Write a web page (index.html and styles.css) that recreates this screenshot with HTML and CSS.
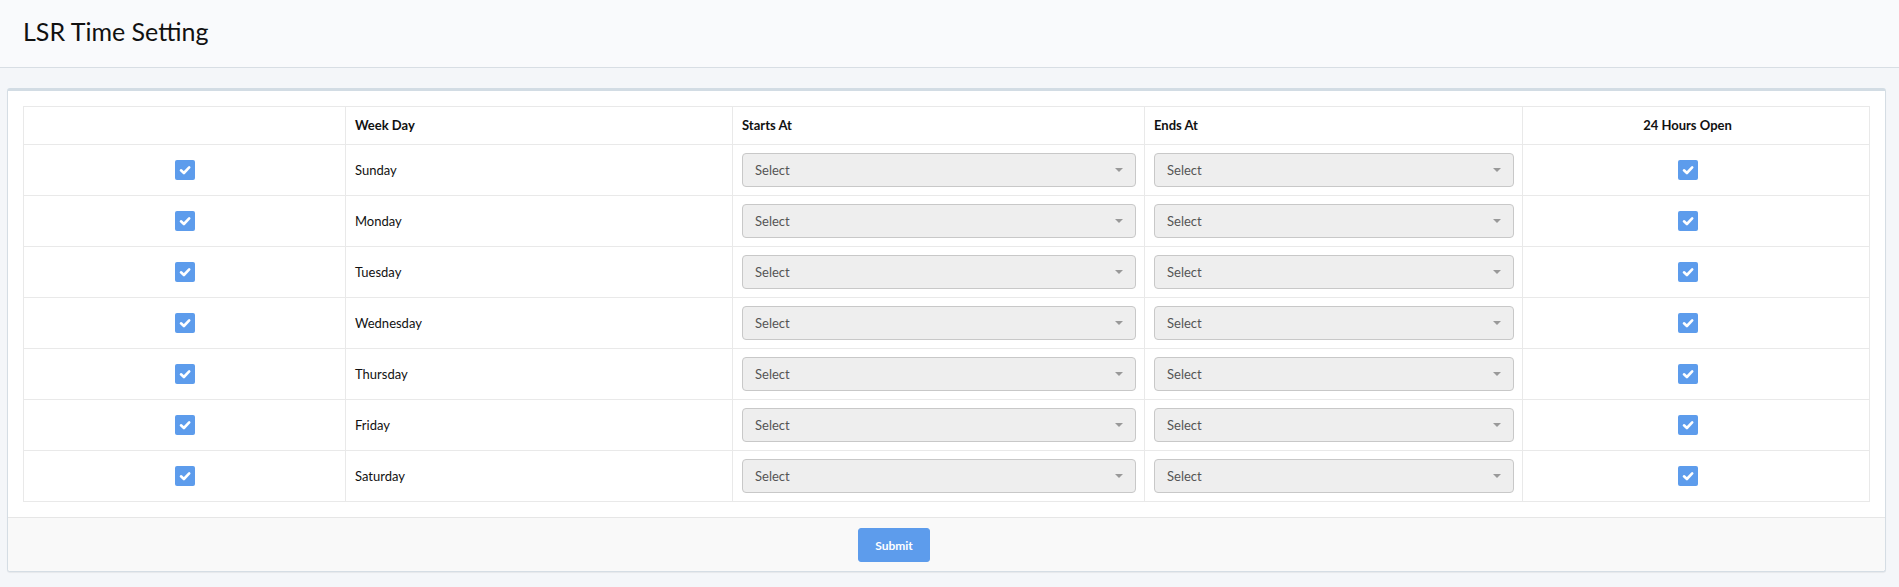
FILE: index.html
```html
<!DOCTYPE html>
<html>
<head>
<meta charset="utf-8">
<title>LSR Time Setting</title>
<link rel="stylesheet" href="styles.css">
</head>
<body>
<header class="page-header">
  <h1 class="page-title">LSR Time Setting</h1>
</header>
<main class="content">
  <section class="card">
    <div class="card-body">
      <table class="time-table">
        <colgroup>
          <col class="c-check"><col class="c-day"><col class="c-start"><col class="c-end"><col class="c-open">
        </colgroup>
        <thead>
          <tr><th></th><th>Week Day</th><th>Starts At</th><th>Ends At</th><th class="center open-cell">24 Hours Open</th></tr>
        </thead>
        <tbody id="rows"></tbody>
      </table>
    </div>
    <div class="card-footer">
      <button class="btn-submit" type="button">Submit</button>
    </div>
  </section>
</main>
<script>
  var days = ["Sunday","Monday","Tuesday","Wednesday","Thursday","Friday","Saturday"];
  var check = '<span class="cbox"><svg viewBox="0 0 20 20" width="20" height="20"><path d="M6 10.3 L8.9 13 L14.2 7.4" fill="none" stroke="#fff" stroke-width="2.6" stroke-linecap="round" stroke-linejoin="round"/></svg></span>';
  var sel = '<div class="select"><span class="select-text">Select</span><span class="select-arrow"></span></div>';
  var html = "";
  days.forEach(function(d){
    html += '<tr><td class="center">' + check + '</td><td>' + d + '</td><td class="sel-cell">' + sel + '</td><td class="sel-cell">' + sel + '</td><td class="center open-cell">' + check + '</td></tr>';
  });
  document.getElementById("rows").innerHTML = html;
</script>
</body>
</html>
```

FILE: styles.css
```css
* { box-sizing: border-box; }
html, body { margin: 0; padding: 0; }
body {
  background: #f4f6f9;
  font-family: Lato, "Open Sans", "Liberation Sans", sans-serif;
  color: #111;
  height: 587px;
  overflow: hidden;
}
.page-header {
  height: 68px;
  background: #f9fafc;
  border-bottom: 1px solid #d8dee4;
  padding: 0 23px;
  display: flex;
  align-items: center;
}
.page-title {
  margin: 0;
  font-size: 25px;
  font-weight: 400;
  color: #111;
  padding-bottom: 6px;
}
.content {
  padding: 20px 13px 0 7px;
}
.card {
  background: #fff;
  border: 1px solid #d5dde4;
  border-top: 3px solid #d2dce4;
  border-radius: 3px;
  box-shadow: 0 1px 1px rgba(0,0,0,0.06);
}
.card-body {
  padding: 15px;
}
.time-table {
  width: 100%;
  border-collapse: collapse;
  font-size: 13px;
  table-layout: fixed;
}
.c-check { width: 322px; }
.c-day { width: 387px; }
.c-start { width: 412px; }
.c-end { width: 378px; }
.c-open { width: auto; }
.time-table th, .time-table td {
  border: 1px solid #e9e9e9;
  padding: 0 9px 1px 9px;
  text-align: left;
  vertical-align: middle;
}
.time-table th {
  height: 38px;
  font-weight: 700;
}
.time-table td {
  height: 51px;
}
.time-table .center { text-align: center; }
.time-table .open-cell { padding-left: 8px; padding-right: 25px; }
.time-table .sel-cell { padding: 0 8px 0 9px; }
.cbox {
  display: inline-block;
  width: 20px;
  height: 20px;
  background: #5d9cec;
  border-radius: 2px;
  vertical-align: middle;
}
.cbox svg { display: block; }
.select {
  height: 34px;
  background: #eeeeee;
  border: 1px solid #c8c8c8;
  border-radius: 4px;
  display: flex;
  align-items: center;
  justify-content: space-between;
  padding: 0 12px 1px 12px;
  color: #555;
  font-size: 13px;
}
.select-arrow {
  width: 0;
  height: 0;
  border-style: solid;
  border-width: 4px 4px 0 4px;
  border-color: #999 transparent transparent transparent;
  margin-top: 1px;
}
.card-footer {
  background: #f9f9f9;
  border-top: 1px solid #e6e6e6;
  padding: 10px 15px 9px 850px;
  border-radius: 0 0 3px 3px;
}
.btn-submit {
  width: 72px;
  height: 34px;
  background: #5d9cec;
  color: #fff;
  border: 1px solid #5d9cec;
  border-radius: 3px;
  font-family: Lato, "Open Sans", "Liberation Sans", sans-serif;
  font-size: 12px;
  font-weight: 700;
  padding: 0;
  display: block;
}
```
